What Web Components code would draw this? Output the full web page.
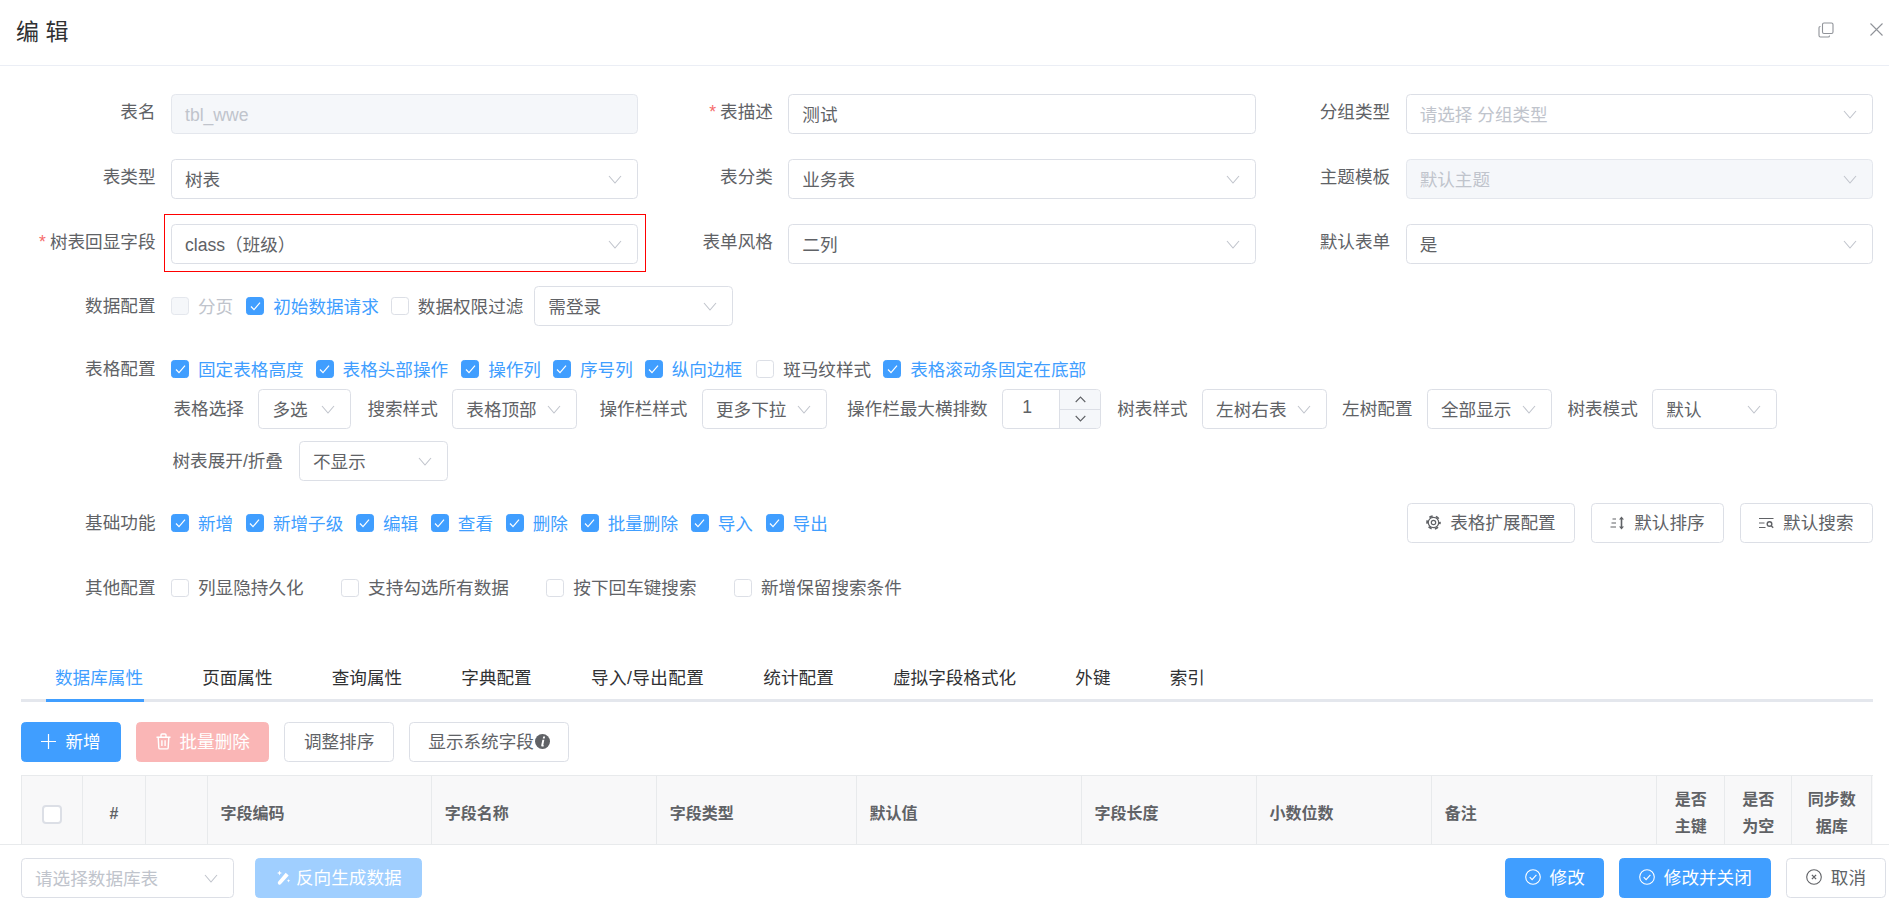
<!DOCTYPE html>
<html lang="zh-CN">
<head>
<meta charset="utf-8">
<title>编辑</title>
<style>
  html, body { margin: 0; height: 100%; background: #fff; overflow: hidden; }
  body { font: 17.6px "Liberation Sans", "Noto Sans CJK SC", sans-serif; color: #606266; }
</style>
</head>
<body>
<edit-dialog heading="编 辑">
  <form-grid>
    <form-field label="表名"><text-input value="tbl_wwe" disabled></text-input></form-field>
    <form-field label="表描述" required><text-input value="测试"></text-input></form-field>
    <form-field label="分组类型"><select-box placeholder="请选择 分组类型"></select-box></form-field>
    <form-field label="表类型"><select-box value="树表"></select-box></form-field>
    <form-field label="表分类"><select-box value="业务表"></select-box></form-field>
    <form-field label="主题模板"><select-box value="默认主题" disabled></select-box></form-field>
    <form-field label="树表回显字段" required marked><select-box value="class（班级）"></select-box></form-field>
    <form-field label="表单风格"><select-box value="二列"></select-box></form-field>
    <form-field label="默认表单"><select-box value="是"></select-box></form-field>
  </form-grid>

  <form-field label="数据配置" style="margin-top:22px">
    <check-item disabled style="margin-right:13px">分页</check-item>
    <check-item checked>初始数据请求</check-item>
    <check-item style="margin-right:11px">数据权限过滤</check-item>
    <select-box value="需登录" style="width:199px"></select-box>
  </form-field>

  <form-field label="表格配置" style="margin-top:23px">
    <check-item checked>固定表格高度</check-item>
    <check-item checked style="margin-right:13px">表格头部操作</check-item>
    <check-item checked>操作列</check-item>
    <check-item checked>序号列</check-item>
    <check-item checked style="margin-right:14px">纵向边框</check-item>
    <check-item>斑马纹样式</check-item>
    <check-item checked>表格滚动条固定在底部</check-item>
    <option-line>
      <inline-field label="表格选择" style="margin-left:2.5px"><select-box value="多选" style="width:93px"></select-box></inline-field>
      <inline-field label="搜索样式"><select-box value="表格顶部" style="width:125px"></select-box></inline-field>
      <inline-field label="操作栏样式" style="margin-left:22.2px"><select-box value="更多下拉" style="width:125px"></select-box></inline-field>
      <inline-field label="操作栏最大横排数" style="margin-left:20px"><number-box value="1"></number-box></inline-field>
      <inline-field label="树表样式"><select-box value="左树右表" style="width:125px"></select-box></inline-field>
      <inline-field label="左树配置" style="margin-left:15px"><select-box value="全部显示" style="width:125px"></select-box></inline-field>
      <inline-field label="树表模式" style="margin-left:15.4px"><select-box value="默认" style="width:125px"></select-box></inline-field>
    </option-line>
    <option-line style="margin-top:12px">
      <inline-field label="树表展开/折叠" style="gap:16px"><select-box value="不显示" style="width:149px"></select-box></inline-field>
    </option-line>
  </form-field>

  <form-field label="基础功能" style="margin-top:22px">
    <check-item checked style="margin-right:12.7px">新增</check-item>
    <check-item checked style="margin-right:12.7px">新增子级</check-item>
    <check-item checked style="margin-right:12.7px">编辑</check-item>
    <check-item checked style="margin-right:12.7px">查看</check-item>
    <check-item checked style="margin-right:12.7px">删除</check-item>
    <check-item checked style="margin-right:12.7px">批量删除</check-item>
    <check-item checked style="margin-right:12.7px">导入</check-item>
    <check-item checked>导出</check-item>
    <action-button icon="gear" style="margin-left:auto">表格扩展配置</action-button>
    <action-button icon="sort" style="margin-left:15.5px">默认排序</action-button>
    <action-button icon="search" style="margin-left:15.5px;margin-right:16px">默认搜索</action-button>
  </form-field>

  <form-field label="其他配置" style="margin-top:24.5px">
    <check-item style="margin-right:37.5px">列显隐持久化</check-item>
    <check-item style="margin-right:37.5px">支持勾选所有数据</check-item>
    <check-item style="margin-right:37.5px">按下回车键搜索</check-item>
    <check-item>新增保留搜索条件</check-item>
  </form-field>

  <tab-bar>
    <tab-item active>数据库属性</tab-item>
    <tab-item>页面属性</tab-item>
    <tab-item>查询属性</tab-item>
    <tab-item>字典配置</tab-item>
    <tab-item style="letter-spacing:.4px">导入/导出配置</tab-item>
    <tab-item>统计配置</tab-item>
    <tab-item>虚拟字段格式化</tab-item>
    <tab-item>外键</tab-item>
    <tab-item>索引</tab-item>
  </tab-bar>

  <tool-bar>
    <action-button kind="primary" icon="plus" style="width:100px">新增</action-button>
    <action-button kind="danger-off" icon="trash">批量删除</action-button>
    <action-button>调整排序</action-button>
    <action-button icon="info" after>显示系统字段</action-button>
  </tool-bar>

  <field-table></field-table>

  <select-box slot="footer-left" placeholder="请选择数据库表" style="width:212.5px"></select-box>
  <action-button slot="footer-left" kind="primary-off" icon="wand" tight>反向生成数据</action-button>
  <action-button slot="footer-right" kind="primary" icon="check">修改</action-button>
  <action-button slot="footer-right" kind="primary" icon="check">修改并关闭</action-button>
  <action-button slot="footer-right" icon="cross">取消</action-button>
</edit-dialog>

<script>
const chevron = `<svg width="14" height="9" viewBox="0 0 14 9" fill="none" stroke="#c0c4cc" stroke-width="1.1"><path d="M1 1l6 7 6-7"/></svg>`

const icons = {
  plus: `<svg width="15" height="15" viewBox="0 0 15 15" stroke="currentColor" stroke-width="1.2"><path d="M7.5 0v15M0 7.5h15"/></svg>`,
  trash: `<svg width="15" height="17" viewBox="0 0 15 17" fill="none" stroke="currentColor" stroke-width="1.4"><path d="M.5 4.3h14M5 4.3V2c0-.6.4-1 1-1h3c.6 0 1 .4 1 1v2.3M2.2 4.3l.6 10.4c0 .7.5 1.2 1.2 1.2h7c.7 0 1.2-.5 1.2-1.2l.6-10.4M5.900 7.300v5.800M9.100 7.300v5.800"/></svg>`,
  gear: `<svg width="15" height="15" viewBox="0 0 15 15" fill="none" stroke="currentColor"><circle cx="7.5" cy="7.5" r="5.2" stroke-width="1.2"/><circle cx="7.5" cy="7.5" r="6.4" stroke-width="1.8" stroke-dasharray="3.4 3.3" stroke-dashoffset="1.7"/><circle cx="7.5" cy="7.5" r="2.2" stroke-width="1.2"/></svg>`,
  sort: `<svg width="15" height="14" viewBox="0 0 15 14" fill="none" stroke="currentColor" stroke-width="1.2"><path d="M2.500 3h3.500M1.500 7h4.500M.5 11h5.500"/><path d="M11.500 2v10" stroke-width="1.600"/><path d="M9 3.500l2.500-3 2.500 3zM9 10.500l2.500 3 2.500-3z" fill="currentColor" stroke="none"/></svg>`,
  search: `<svg width="15" height="14" viewBox="0 0 15 14" fill="none" stroke="currentColor" stroke-width="1.2"><path d="M0 2.500h14.500M0 7h5.500M0 11.500h6.500"/><circle cx="10.500" cy="8" r="2.300" stroke-width="1.400"/><path d="M12.200 9.700l2 2" stroke-width="1.400"/></svg>`,
  info: `<svg width="15" height="15" viewBox="0 0 15 15"><circle cx="7.5" cy="7.5" r="7.5" fill="#606266"/><path d="M8.200 2.600h1.900l-.4 1.900H7.800zM7.400 5.800h1.900L8.300 11c-.1.4.1.5.7.4l-.2.9c-1.500.5-2.900.2-2.500-1.300z" fill="#fff"/></svg>`,
  wand: `<svg width="15" height="16" viewBox="0 0 15 16" fill="currentColor"><path d="M9.700 3.800l3 2.700-7.700 8.600c-.7.8-1.800.8-2.600.1s-.8-1.800-.1-2.600z"/><path d="M3.500 1.500l.7 1.800 1.800.7-1.800.7-.7 1.800-.7-1.800L1 4l1.800-.7zM12.500 10l.5 1.300 1.300.5-1.300.5-.5 1.300-.5-1.300-1.300-.5 1.300-.5z"/></svg>`,
  check: `<svg width="16" height="16" viewBox="0 0 16 16" fill="none" stroke="currentColor" stroke-width="1.1"><circle cx="8" cy="8" r="7.300"/><path d="M4.700 8.100l2.400 2.500 4.300-4.800"/></svg>`,
  cross: `<svg width="16" height="16" viewBox="0 0 16 16" fill="none" stroke="currentColor" stroke-width="1.1"><circle cx="8" cy="8" r="7.300"/><path d="M5.900 5.900l4.200 4.200M10.100 5.900l-4.200 4.200" stroke-width="1.300"/></svg>`,
}

// small helper, every element only differs by its css and markup
const mount = (el, css, html) => {
  if (el.shadowRoot) return
  el.attachShadow({ mode: 'open' }).innerHTML = `<style>${css}</style>${html}`
}

class EditDialog extends HTMLElement {
  connectedCallback() {
    mount(this, `
      :host { display: flex; flex-direction: column; height: 100vh; }
      header {
        flex: none; height: 66px; box-sizing: border-box;
        display: flex; align-items: center;
        padding: 0 6px 6px 16px;
        border-bottom: 1px solid #ebeef5;
      }
      h1 { flex: 1; margin: 0; font-size: 23px; font-weight: 400; color: #303133; }
      .copy { margin-right: 36px; }
      main { flex: 1; min-height: 0; overflow: hidden; display: block; padding-top: 28px; box-sizing: border-box; }
      footer {
        flex: none; height: 57px; box-sizing: border-box;
        display: flex; justify-content: space-between; align-items: flex-start;
        padding: 13px 3.5px 0 21px;
        border-top: 1px solid #e8eaec;
        background: #fff;
      }
      .side { display: flex; gap: 15px; }
      .side.left { gap: 21.5px; }
    `, `
      <header>
        <h1>${this.getAttribute('heading')}</h1>
        <svg class="copy" width="16" height="16" viewBox="0 0 16 16" fill="none" stroke="#909399" stroke-width="1.1">
          <rect x="4.5" y="1" width="10.500" height="10.500" rx="1.5"/>
          <path d="M2.500 4.500h-.2C1.500 4.500 1 5 1 5.800v7.700C1 14.400 1.600 15 2.500 15h7.700c.8 0 1.300-.5 1.300-1.300v-.2"/>
        </svg>
        <svg width="13" height="13" viewBox="0 0 13 13" stroke="#909399" stroke-width="1.1"><path d="M.5.5l12 12M12.500.5l-12 12"/></svg>
      </header>
      <main><slot></slot></main>
      <footer>
        <div class="side left"><slot name="footer-left"></slot></div>
        <div class="side"><slot name="footer-right"></slot></div>
      </footer>
    `)
  }
}

class FormGrid extends HTMLElement {
  connectedCallback() {
    mount(this, `
      :host {
        display: grid; grid-template-columns: repeat(3, 1fr); row-gap: 25px;
        padding: 0 16px 0 21px;
      }
    `, `<slot></slot>`)
  }
}

class FormField extends HTMLElement {
  connectedCallback() {
    const star = this.hasAttribute('required') ? '<i>*</i>' : ''
    const frame = this.hasAttribute('marked') ? '<div class="frame"></div>' : ''
    const inGrid = !!this.closest('form-grid')
    mount(this, `
      :host { display: flex; position: relative; }
      label {
        flex: none; width: 150px; box-sizing: border-box; padding-right: 15.5px;
        text-align: right; line-height: ${inGrid ? 36 : 40}px; white-space: nowrap;
      }
      i { font-style: normal; color: #f56c6c; margin-right: 4px; }
      .body { flex: 1; min-width: 0; min-height: 40px; display: flex; flex-wrap: wrap; align-items: center; }
      .fill ::slotted(*) { flex: 1; }
      .frame {
        position: absolute; left: 143px; right: -8px; top: -10px; bottom: -8px;
        border: 1.5px solid #f00; pointer-events: none;
      }
    `, `<label>${star}${this.getAttribute('label')}</label><div class="body ${inGrid ? 'fill' : ''}"><slot></slot></div>${frame}`)
    if (!inGrid) this.style.paddingLeft = '21px'
  }
}

class TextInput extends HTMLElement {
  connectedCallback() {
    mount(this, `
      :host { display: block; height: 40px; }
      div {
        height: 100%; box-sizing: border-box; padding: 1px 13px 0; line-height: 38px;
        border: 1px solid #dcdfe6; border-radius: 4.4px; background: #fff; color: #606266;
      }
      :host([disabled]) div { background: #f5f7fa; border-color: #e4e7ed; color: #c0c4cc; }
    `, `<div>${this.getAttribute('value')}</div>`)
  }
}

class SelectBox extends HTMLElement {
  connectedCallback() {
    const value = this.getAttribute('value')
    mount(this, `
      :host { display: block; height: 40px; flex: none; }
      div {
        height: 100%; box-sizing: border-box; padding: 0 15px 0 13px;
        display: flex; align-items: center; justify-content: space-between;
        border: 1px solid #dcdfe6; border-radius: 4.4px; background: #fff; color: #606266;
        white-space: nowrap;
      }
      span { line-height: 36px; padding-top: 2px; }
      span.empty { color: #c0c4cc; }
      :host([disabled]) div { background: #f5f7fa; border-color: #e4e7ed; color: #c0c4cc; }
      svg { flex: none; }
    `, `<div><span class="${value ? '' : 'empty'}">${value || this.getAttribute('placeholder')}</span>${chevron}</div>`)
  }
}

class NumberBox extends HTMLElement {
  connectedCallback() {
    mount(this, `
      :host { display: block; width: 99px; height: 40px; flex: none; }
      .box {
        height: 100%; box-sizing: border-box; display: flex;
        border: 1px solid #dcdfe6; border-radius: 4.4px; overflow: hidden; background: #fff;
      }
      .val { flex: 1; padding-left: 19px; line-height: 34px; }
      .btns { width: 40px; display: flex; flex-direction: column; border-left: 1px solid #dcdfe6; background: #f5f7fa; }
      .btns span { flex: 1; display: flex; align-items: center; justify-content: center; }
      .btns span + span { border-top: 1px solid #dcdfe6; }
    `, `
      <div class="box">
        <div class="val">${this.getAttribute('value')}</div>
        <div class="btns">
          <span><svg width="11" height="7" viewBox="0 0 11 7" fill="none" stroke="#606266" stroke-width="1.1"><path d="M.7 6l4.800-5 4.800 5"/></svg></span>
          <span><svg width="11" height="7" viewBox="0 0 11 7" fill="none" stroke="#606266" stroke-width="1.1"><path d="M.7 1l4.800 5 4.800-5"/></svg></span>
        </div>
      </div>
    `)
  }
}

class CheckItem extends HTMLElement {
  connectedCallback() {
    mount(this, `
      :host { display: inline-flex; align-items: center; gap: 9px; margin-right: 12px; height: 40px; white-space: nowrap; color: #606266; }
      :host([checked]) { color: #409eff; }
      :host([disabled]) { color: #c0c4cc; }
      .box {
        width: 18px; height: 18px; box-sizing: border-box; flex: none;
        border: 1px solid #dcdfe6; border-radius: 3.3px; background: #fff;
        display: flex; align-items: center; justify-content: center;
      }
      .text { padding-bottom: 2px; }
      :host([checked]) .box { background: #409eff; border-color: #409eff; }
      :host([disabled]) .box { background: #f5f7fa; border-color: #e4e7ed; }
      svg { display: none; }
      :host([checked]) svg { display: block; }
    `, `
      <span class="box"><svg width="11" height="9" viewBox="0 0 11 9" fill="none" stroke="#fff" stroke-width="1.2"><path d="M1 4.500l3 3.200 6-7"/></svg></span>
      <span class="text"><slot></slot></span>
    `)
  }
}

class OptionLine extends HTMLElement {
  connectedCallback() {
    mount(this, `
      :host { display: flex; flex: 0 0 100%; align-items: flex-start; }
    `, `<slot></slot>`)
  }
}

class InlineField extends HTMLElement {
  connectedCallback() {
    mount(this, `
      :host { display: flex; align-items: flex-start; gap: 14.5px; margin-left: 16px; }
      :host(:first-child) { margin-left: 1.5px; }
      span { line-height: 40px; white-space: nowrap; }
    `, `<span>${this.getAttribute('label')}</span><slot></slot>`)
  }
}

class ActionButton extends HTMLElement {
  connectedCallback() {
    const icon = icons[this.getAttribute('icon')] || ''
    const after = this.hasAttribute('after')
    mount(this, `
      :host {
        display: inline-flex; align-items: center; justify-content: center; gap: 9px;
        height: 40px; box-sizing: border-box; padding: 0 18.5px 3px;
        border: 1px solid #dcdfe6; border-radius: 4.4px; background: #fff; color: #606266;
        white-space: nowrap; flex: none;
      }
      :host([slot]) { padding-bottom: 4px; }
      :host([after]) { gap: 1px; }
      :host([tight]) { gap: 5px; padding: 0 19px 4px 20px; }
      :host([kind=primary]) { background: #409eff; border-color: #409eff; color: #fff; }
      :host([kind=primary-off]) { background: #a0cfff; border-color: #a0cfff; color: #fff; }
      :host([kind=danger-off]) { background: #fab6b6; border-color: #fab6b6; color: #fff; }
      svg { display: block; flex: none; position: relative; top: 1px; }
    `, after ? `<slot></slot>${icon}` : `${icon}<slot></slot>`)
  }
}

class TabBar extends HTMLElement {
  connectedCallback() {
    mount(this, `
      :host {
        display: flex; gap: 59.2px; height: 48px; box-sizing: border-box;
        margin: 46px 16px 0 21px; padding-left: 34px;
        border-bottom: 3px solid #e4e7ed;
      }
    `, `<slot></slot>`)
  }
}

class TabItem extends HTMLElement {
  connectedCallback() {
    mount(this, `
      :host { display: block; position: relative; height: 48px; line-height: 48px; color: #303133; white-space: nowrap; }
      :host([active]) { color: #409eff; }
      :host([active])::after {
        content: ""; position: absolute; left: -9px; right: -1px; bottom: 0; height: 3px; background: #409eff;
      }
    `, `<slot></slot>`)
  }
}

class ToolBar extends HTMLElement {
  connectedCallback() {
    mount(this, `
      :host { display: flex; gap: 15px; margin: 20px 0 13px 21px; }
    `, `<slot></slot>`)
  }
}

const columns = [
  [61.1, '', 'box'], [62.9, '#', 'mid'], [62.1, '', 'mid'],
  [224.1, '字段编码'], [225, '字段名称'], [199.8, '字段类型'], [225, '默认值'],
  [175, '字段长度'], [175.2, '小数位数'], [225.3, '备注'],
  [67.8, '是否<br>主键', 'mid'], [66.9, '是否<br>为空', 'mid'], [80.3, '同步数<br>据库', 'mid'],
]

class FieldTable extends HTMLElement {
  connectedCallback() {
    const cells = columns.map(([, text, kind]) =>
      `<div class="cell ${kind || ''}">${kind === 'box' ? '<span class="all"></span>' : text}</div>`
    ).join('')
    mount(this, `
      :host {
        display: grid; margin-left: 21px; width: 1852px;
        grid-template-columns: ${columns.map(c => c[0] + 'px').join(' ')};
        border-top: 1px solid #e8eaec; border-left: 1px solid #e8eaec; box-sizing: border-box;
        font-size: 16px; font-weight: 700; color: #606266; background: #f8f8f9;
      }
      .cell {
        height: 78px; box-sizing: border-box; padding-left: 12.5px; line-height: 26.6px;
        display: flex; align-items: center; border-right: 1px solid #e8eaec; border-bottom: 1px solid #e8eaec;
      }
      .mid, .box { padding: 0; justify-content: center; text-align: center; }
      .all { width: 20px; height: 19px; box-sizing: border-box; border: 2px solid #dcdfe6; border-radius: 4px; background: #fff; }
    `, cells)
  }
}

customElements.define('edit-dialog', EditDialog)
customElements.define('form-grid', FormGrid)
customElements.define('form-field', FormField)
customElements.define('text-input', TextInput)
customElements.define('select-box', SelectBox)
customElements.define('number-box', NumberBox)
customElements.define('check-item', CheckItem)
customElements.define('option-line', OptionLine)
customElements.define('inline-field', InlineField)
customElements.define('action-button', ActionButton)
customElements.define('tab-bar', TabBar)
customElements.define('tab-item', TabItem)
customElements.define('tool-bar', ToolBar)
customElements.define('field-table', FieldTable)
</script>
</body>
</html>
